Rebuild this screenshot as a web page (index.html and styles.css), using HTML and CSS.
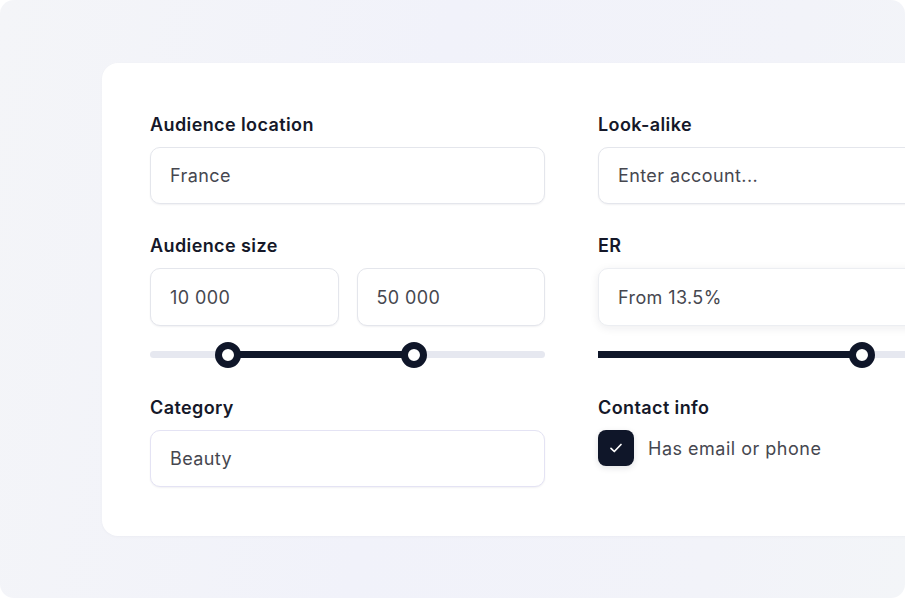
FILE: index.html
```html
<!DOCTYPE html>
<html lang="en">
<head>
  <meta charset="UTF-8">
  <meta name="viewport" content="width=device-width, initial-scale=1.0">
  <title>Filters</title>
  <link rel="stylesheet" href="styles.css">
</head>
<body>
  <div class="frame">
    <div class="card">
      <div class="filters">
        <div class="field">
          <div class="label">Audience location</div>
          <div class="input">France</div>
        </div>
        <div class="field">
          <div class="label">Look-alike</div>
          <div class="input">Enter account...</div>
        </div>

        <div class="field">
          <div class="label">Audience size</div>
          <div class="pair">
            <div class="input">10 000</div>
            <div class="input">50 000</div>
          </div>
          <div class="slider">
            <div class="fill" style="left: 19.7%; width: 47.1%;"></div>
            <span class="thumb" style="left: 19.7%;"></span>
            <span class="thumb" style="left: 66.8%;"></span>
          </div>
        </div>
        <div class="field">
          <div class="label">ER</div>
          <div class="input raised">From 13.5%</div>
          <div class="slider">
            <div class="fill" style="left: 0; width: 66.8%;"></div>
            <span class="thumb" style="left: 66.8%;"></span>
          </div>
        </div>

        <div class="field">
          <div class="label">Category</div>
          <div class="input tint">Beauty</div>
        </div>
        <div class="field">
          <div class="label">Contact info</div>
          <label class="check">
            <span class="box">
              <svg width="16" height="16" viewBox="0 0 16 16" fill="none">
                <path d="M3 8.4l3.3 3.1 6.7-7" stroke="#fff" stroke-width="1.7" stroke-linecap="round" stroke-linejoin="round"/>
              </svg>
            </span>
            Has email or phone
          </label>
        </div>
      </div>
    </div>
  </div>
</body>
</html>
```

FILE: styles.css
```css
*{ padding: 0; margin: 0; box-sizing: border-box; }
body{ background: #fff; font-family: Inter, "Noto Sans", sans-serif; }

.frame{ width: 905px; height: 598px; border-radius: 14px; overflow: hidden;
  padding: 63px 0 0 102px;
  background: linear-gradient(100deg, #f4f5f8 0%, #f1f2fa 45%, #f2f3f9 80%, #f3f5f8 100%);
}
.card{ width: 1041px; background: #fff; border-radius: 16px;
  padding: 50px 48px 49px;
  box-shadow: 0 1px 3px rgba(30, 35, 70, .03);
}

.filters{ display: grid; grid-template-columns: 395px 395px; column-gap: 53px; row-gap: 30px; }

.label{ font-size: 18px; line-height: 24px; font-weight: 600; color: #151829;
  letter-spacing: 0.4px; margin-bottom: 10px; }

.input{ height: 57px; border: 1px solid #e4e6ec; border-radius: 10px; background: #fff;
  padding: 0 19px; display: flex; align-items: center;
  font-size: 18px; color: #46474f; letter-spacing: 0.4px;
  box-shadow: 0 1px 2px rgba(20, 25, 50, .06);
}
.input.raised{ height: 58px; border-color: #eceef2; box-shadow: 0 2px 10px rgba(20, 25, 50, .08); }
.input.tint{ border-color: #e4e3f4; }

.pair{ display: flex; gap: 18px; }
.pair .input{ flex: 1; height: 58px; }

.slider{ position: relative; height: 7px; border-radius: 4px; background: #e6e8f0; margin: 25px 0 8px; }
.slider .fill{ position: absolute; top: 0; height: 7px; background: #0f1629; }
.thumb{ position: absolute; top: 50%; width: 26px; height: 26px; margin: -13px 0 0 -13px;
  border-radius: 50%; background: #fff; border: 7px solid #0f1629; }

.check{ display: flex; align-items: center; gap: 14px; height: 36px;
  font-size: 18px; color: #46474f; letter-spacing: 0.5px; }
.box{ width: 36px; height: 36px; border-radius: 8px; background: #0f1629;
  display: flex; align-items: center; justify-content: center;
  box-shadow: 0 2px 6px rgba(15, 22, 41, .12); }
```
